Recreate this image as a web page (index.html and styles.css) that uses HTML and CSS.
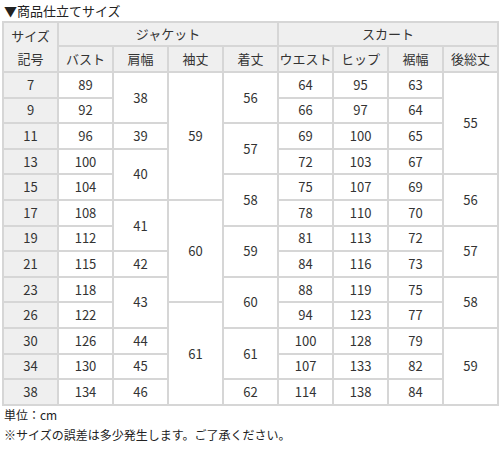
FILE: index.html
```html
<!DOCTYPE html>
<html lang="ja">
<head>
<meta charset="utf-8">
<link rel="stylesheet" href="styles.css">
</head>
<body>
<div class="page">
  <div class="title">▼商品仕立てサイズ</div>
  <table class="size">
    <colgroup>
      <col class="c"><col class="c"><col class="c"><col class="c"><col class="c"><col class="c"><col class="c"><col class="c"><col class="c">
    </colgroup>
    <thead>
      <tr class="h1">
        <th rowspan="2" class="head twoline">サイズ<br>記号</th>
        <th colspan="4" class="head">ジャケット</th>
        <th colspan="4" class="head">スカート</th>
      </tr>
      <tr class="h2">
        <th class="head">バスト</th>
        <th class="head">肩幅</th>
        <th class="head">袖丈</th>
        <th class="head">着丈</th>
        <th class="head">ウエスト</th>
        <th class="head">ヒップ</th>
        <th class="head">裾幅</th>
        <th class="head">後総丈</th>
      </tr>
    </thead>
    <tbody>
      <tr><th class="head">7</th><td>89</td><td rowspan="2">38</td><td rowspan="5">59</td><td rowspan="2">56</td><td>64</td><td>95</td><td>63</td><td rowspan="4">55</td></tr>
      <tr><th class="head">9</th><td>92</td><td>66</td><td>97</td><td>64</td></tr>
      <tr><th class="head">11</th><td>96</td><td>39</td><td rowspan="2">57</td><td>69</td><td>100</td><td>65</td></tr>
      <tr><th class="head">13</th><td>100</td><td rowspan="2">40</td><td>72</td><td>103</td><td>67</td></tr>
      <tr><th class="head">15</th><td>104</td><td rowspan="2">58</td><td>75</td><td>107</td><td>69</td><td rowspan="2">56</td></tr>
      <tr><th class="head">17</th><td>108</td><td rowspan="2">41</td><td rowspan="4">60</td><td>78</td><td>110</td><td>70</td></tr>
      <tr><th class="head">19</th><td>112</td><td rowspan="2">59</td><td>81</td><td>113</td><td>72</td><td rowspan="2">57</td></tr>
      <tr><th class="head">21</th><td>115</td><td>42</td><td>84</td><td>116</td><td>73</td></tr>
      <tr><th class="head">23</th><td>118</td><td rowspan="2">43</td><td rowspan="2">60</td><td>88</td><td>119</td><td>75</td><td rowspan="2">58</td></tr>
      <tr><th class="head">26</th><td>122</td><td rowspan="4">61</td><td>94</td><td>123</td><td>77</td></tr>
      <tr><th class="head">30</th><td>126</td><td>44</td><td rowspan="2">61</td><td>100</td><td>128</td><td>79</td><td rowspan="3">59</td></tr>
      <tr><th class="head">34</th><td>130</td><td>45</td><td>107</td><td>133</td><td>82</td></tr>
      <tr><th class="head">38</th><td>134</td><td>46</td><td>62</td><td>114</td><td>138</td><td>84</td></tr>
    </tbody>
  </table>
  <div class="notes">
    <p class="note">単位：cm</p>
    <p class="note">※サイズの誤差は多少発生します。ご了承ください。</p>
  </div>
</div>
</body>
</html>
```

FILE: styles.css
```css
html, body {
  margin: 0;
  padding: 0;
  background: #ffffff;
}

body {
  font-family: "Noto Sans CJK JP", "Noto Sans", sans-serif;
  color: #333333;
}

.page {
  width: 500px;
  padding: 0 0 0 2px;
  box-sizing: border-box;
}

.title {
  height: 21px;
  line-height: 22px;
  font-size: 13px;
  padding-left: 2px;
  color: #222222;
}

.size {
  border-collapse: collapse;
  table-layout: fixed;
  width: 495px;
  font-size: 13px;
}

.size .c {
  width: 55px;
}

.size th,
.size td {
  border: 2px solid #d6d6d6;
  text-align: center;
  vertical-align: middle;
  padding: 0;
  font-weight: normal;
  line-height: 16px;
  color: #333333;
}

.size .twoline {
  line-height: 23px;
}

.size .head {
  background: #efefef;
}

.size td {
  background: #ffffff;
}

.h1 {
  height: 24px;
}

.h2 {
  height: 26px;
}

.size tbody tr {
  height: 25.6px;
}

.notes {
  padding-left: 2px;
  display: flex;
  flex-direction: column;
  gap: 2px;
}

.note {
  margin: 0;
  font-size: 12px;
  line-height: 18px;
  color: #222222;
}
```
